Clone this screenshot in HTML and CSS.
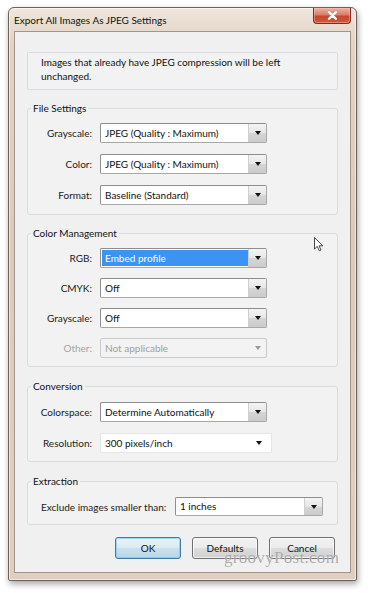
FILE: index.html
```html
<!DOCTYPE html>
<html>
<head>
<meta charset="utf-8">
<title>Export All Images As JPEG Settings</title>
<link rel="stylesheet" href="styles.css">
</head>
<body>
<div class="window">
  <div class="titlebar">
    <span class="title">Export All Images As JPEG Settings</span>
    <span class="close"><svg width="11" height="9" viewBox="0 0 11 9"><path d="M2 1.2 L9 7.8 M9 1.2 L2 7.8" stroke="#fff" stroke-width="2.3" stroke-linecap="round"/></svg></span>
  </div>
  <div class="client">
    <div class="info">Images that already have JPEG compression will be left<br>unchanged.</div>

    <fieldset class="group g-file">
      <legend>File Settings</legend>
      <div class="rows">
        <span class="lbl">Grayscale:</span>
        <div class="combo"><span class="val">JPEG (Quality : Maximum)</span><span class="arrow"><i></i></span></div>
        <span class="lbl">Color:</span>
        <div class="combo"><span class="val">JPEG (Quality : Maximum)</span><span class="arrow"><i></i></span></div>
        <span class="lbl">Format:</span>
        <div class="combo"><span class="val">Baseline (Standard)</span><span class="arrow"><i></i></span></div>
      </div>
    </fieldset>

    <fieldset class="group g-color">
      <legend>Color Management</legend>
      <div class="rows tight">
        <span class="lbl">RGB:</span>
        <div class="combo"><span class="val sel">Embed profile</span><span class="arrow"><i></i></span></div>
        <span class="lbl">CMYK:</span>
        <div class="combo"><span class="val">Off</span><span class="arrow"><i></i></span></div>
        <span class="lbl">Grayscale:</span>
        <div class="combo"><span class="val">Off</span><span class="arrow"><i></i></span></div>
        <span class="lbl disabled">Other:</span>
        <div class="combo off"><span class="val">Not applicable</span><span class="arrow"><i></i></span></div>
      </div>
    </fieldset>

    <fieldset class="group g-conv">
      <legend>Conversion</legend>
      <div class="rows">
        <span class="lbl">Colorspace:</span>
        <div class="combo"><span class="val">Determine Automatically</span><span class="arrow"><i></i></span></div>
        <span class="lbl">Resolution:</span>
        <div class="combo flat"><span class="val">300 pixels/inch</span><span class="arrow"><i></i></span></div>
      </div>
    </fieldset>

    <fieldset class="group g-ext">
      <legend>Extraction</legend>
      <div class="ext-row">
        <span class="ext-lbl">Exclude images smaller than:</span>
        <div class="combo ext"><span class="val">1 inches</span><span class="arrow"><i></i></span></div>
      </div>
    </fieldset>

    <div class="actions">
      <span class="btn default">OK</span>
      <span class="btn">Defaults</span>
      <span class="btn">Cancel</span>
    </div>
  </div>
</div>
<div class="watermark">groovyPost.com</div>
<svg class="cursor" width="11" height="15" viewBox="0 0 11 15"><path d="M0.5 0.5 L0.5 12 L3.3 9.4 L5.3 13.8 L7 13 L5.1 8.8 L8.8 8.8 Z" fill="#fff" stroke="#333" stroke-width="0.9" stroke-linejoin="round"/></svg>
</body>
</html>
```

FILE: styles.css
```css
html, body {
  margin: 0;
  padding: 0;
  background: #ffffff;
}

body {
  font-family: Lato, "Open Sans", sans-serif;
  font-size: 10px;
  color: #111;
  position: relative;
  width: 369px;
  height: 593px;
  overflow: hidden;
}

.window {
  box-sizing: border-box;
  margin: 7px 0 0 8px;
  width: 349px;
  height: 574px;
  border: 1px solid #6e6054;
  border-radius: 6px 6px 2px 2px;
  padding: 0 5px 7px 5px;
  background: linear-gradient(180deg, #efe6dd 0%, #e2d3c5 6%, #dccbbb 40%, #dfcfc0 100%);
  box-shadow: inset 0 0 0 1px rgba(255, 255, 255, 0.55), 1px 3px 6px rgba(0, 0, 0, 0.35);
  display: flex;
  flex-direction: column;
}

.titlebar {
  height: 23px;
  display: flex;
  justify-content: space-between;
  align-items: flex-start;
  flex: none;
}

.title {
  padding-top: 5px;
  line-height: 14px;
  font-size: 10px;
  color: #111;
}

.close {
  box-sizing: border-box;
  width: 38px;
  height: 16px;
  border: 1px solid #7d2c1f;
  border-top: none;
  border-radius: 0 0 4px 4px;
  background: linear-gradient(180deg, #eab2a5 0%, #dc7d69 45%, #c8452e 55%, #d0583d 100%);
  box-shadow: inset 0 0 0 1px rgba(255, 200, 190, 0.45);
  display: flex;
  align-items: center;
  justify-content: center;
}

.close svg {
  display: block;
}

.client {
  flex: 1;
  box-sizing: border-box;
  border: 1px solid #a3958a;
  background: #f0f0f0;
  padding: 20px 12px 0 12px;
  display: flex;
  flex-direction: column;
}

.info {
  box-sizing: border-box;
  height: 38px;
  border: 1px solid #dadcdf;
  border-radius: 2px;
  background: #f2f2f2;
  padding: 2px 8px 0 13px;
  line-height: 14px;
}

.group {
  margin: 11px 0 0 0;
  min-width: 0;
  border: 1px solid #d6dce2;
  border-radius: 3px;
  padding: 8px 0 9px 0;
  background: #f2f2f2;
}

.group legend {
  padding: 0 2px;
  margin-left: 3px;
  line-height: 14px;
  color: #111;
}

.g-color {
  padding-bottom: 8px;
}

.g-conv {
  margin-top: 12px;
  padding-top: 9px;
  padding-bottom: 8px;
}

.g-ext {
  margin-top: 12px;
  padding-top: 9px;
  padding-bottom: 8px;
}

.rows {
  display: grid;
  grid-template-columns: 64px auto;
  column-gap: 8px;
  row-gap: 11px;
  align-items: center;
  justify-items: start;
}

.rows.tight {
  row-gap: 10px;
}

.lbl {
  justify-self: end;
  line-height: 14px;
  color: #1a1a1a;
}

.lbl.disabled {
  color: #a4a4a4;
}

.combo {
  box-sizing: border-box;
  width: 167px;
  height: 20px;
  border: 1px solid #8e8e8e;
  border-right-color: #a8a8a8;
  border-bottom-color: #a8a8a8;
  border-radius: 2px;
  background: #ffffff;
  display: flex;
  align-items: stretch;
}

.combo .val {
  flex: 1;
  padding-left: 4px;
  line-height: 18px;
  white-space: nowrap;
  color: #111;
}

.combo .val.sel {
  margin: 1px 0 1px 1px;
  padding-left: 3px;
  line-height: 16px;
  background: #3b93f3;
  color: #ffffff;
}

.combo .arrow {
  width: 17px;
  border-left: 1px solid #cfcfcf;
  background: linear-gradient(180deg, #f4f4f4 0%, #e6e6e6 50%, #d6d6d6 51%, #cbcbcb 100%);
  display: flex;
  align-items: center;
  justify-content: center;
}

.combo .arrow i {
  display: block;
  width: 0;
  height: 0;
  border-left: 3.5px solid transparent;
  border-right: 3.5px solid transparent;
  border-top: 4px solid #111;
}

.combo.off {
  border-color: #c9c9c9;
  background: #f3f3f3;
}

.combo.off .val {
  color: #a0a0a0;
}

.combo.off .arrow {
  background: transparent;
  border-left: none;
}

.combo.off .arrow i {
  border-top-color: #9a9a9a;
}

.combo.flat {
  width: 172px;
  border-color: #e6e6e6;
}

.combo.flat .arrow {
  background: transparent;
  border-left: none;
  width: 24px;
}

.combo.ext {
  width: 148px;
  height: 19px;
}

.combo.ext .val {
  line-height: 17px;
}

.ext-row {
  display: flex;
  align-items: center;
  padding-left: 13px;
}

.ext-lbl {
  width: 134px;
  flex: none;
  line-height: 14px;
  color: #1a1a1a;
}

.actions {
  display: flex;
  justify-content: flex-end;
  gap: 11px;
  margin-top: 12px;
  padding-right: 3px;
}

.btn {
  box-sizing: border-box;
  width: 66px;
  height: 22px;
  border: 1px solid #707070;
  border-radius: 3px;
  background: linear-gradient(180deg, #f3f3f3 0%, #ebebeb 48%, #dddddd 52%, #cfcfcf 100%);
  box-shadow: inset 0 0 0 1px rgba(255, 255, 255, 0.7);
  display: flex;
  align-items: center;
  justify-content: center;
  color: #111;
  line-height: 14px;
}

.btn.default {
  border-color: #3d7bad;
  background: linear-gradient(180deg, #e9f3f9 0%, #dbebf4 48%, #c9e0ee 52%, #bcd6e8 100%);
  box-shadow: inset 0 0 0 1px rgba(110, 200, 240, 0.6);
}

.watermark {
  position: absolute;
  left: 224px;
  top: 548px;
  font-family: "Liberation Serif", serif;
  font-size: 17px;
  letter-spacing: 0.3px;
  color: rgba(135, 135, 135, 0.7);
  text-shadow: 0 0 1px rgba(255, 255, 255, 0.9);
  line-height: 20px;
}

.cursor {
  position: absolute;
  left: 314px;
  top: 237px;
}
```
